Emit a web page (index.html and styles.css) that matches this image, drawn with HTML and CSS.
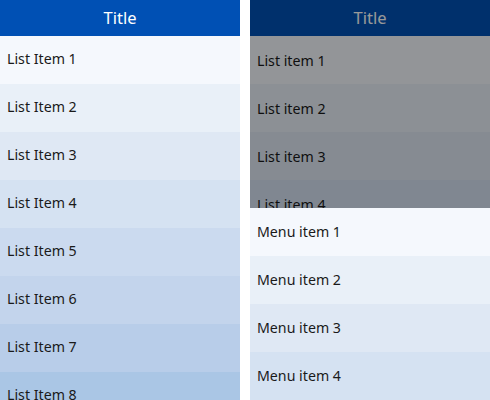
FILE: index.html
```html
<!DOCTYPE html>
<html>
<head>
<meta charset="utf-8">
<link rel="stylesheet" href="styles.css">
</head>
<body>
<div class="screens">
  <section class="screen">
    <header class="title">Title</header>
    <ul class="list">
      <li class="row r1">List Item 1</li>
      <li class="row r2">List Item 2</li>
      <li class="row r3">List Item 3</li>
      <li class="row r4">List Item 4</li>
      <li class="row r5">List Item 5</li>
      <li class="row r6">List Item 6</li>
      <li class="row r7">List Item 7</li>
      <li class="row r8">List Item 8</li>
    </ul>
  </section>
  <section class="screen popup-screen">
    <header class="title">Title</header>
    <ul class="list">
      <li class="row r1">List item 1</li>
      <li class="row r2">List item 2</li>
      <li class="row r3">List item 3</li>
      <li class="row r4">List item 4</li>
      <li class="row r5">List item 5</li>
    </ul>
    <div class="dim"></div>
    <ul class="menu">
      <li class="row r1">Menu item 1</li>
      <li class="row r2">Menu item 2</li>
      <li class="row r3">Menu item 3</li>
      <li class="row r4">Menu item 4</li>
    </ul>
  </section>
</div>
</body>
</html>
```
FILE: styles.css
```css
html, body {
  margin: 0;
  padding: 0;
  background: #ffffff;
}
body {
  font-family: "Noto Sans", "DejaVu Sans", sans-serif;
  width: 490px;
  height: 400px;
  overflow: hidden;
}
.screens {
  display: flex;
  gap: 10px;
  height: 400px;
}
.screen {
  width: 240px;
  height: 400px;
  overflow: hidden;
  display: flex;
  flex-direction: column;
}
.popup-screen {
  position: relative;
}
.title {
  height: 35px;
  padding-bottom: 1px;
  flex: none;
  background: #0050b4;
  color: #ffffff;
  font-size: 16.5px;
  display: flex;
  align-items: center;
  justify-content: center;
}
.list, .menu {
  list-style: none;
  margin: 0;
  padding: 0;
}
.row {
  height: 45px;
  padding-bottom: 3px;
  display: flex;
  align-items: center;
  padding-left: 7px;
  font-size: 14.2px;
  color: #1a1a1a;
}
.r1 { background: #f5f8fd; }
.r2 { background: #e9f0f8; }
.r3 { background: #dfe8f4; }
.r4 { background: #d5e2f2; }
.r5 { background: #cbdaef; }
.r6 { background: #c3d4ec; }
.r7 { background: #b8cde9; }
.r8 { background: #aac6e5; }
.dim {
  position: absolute;
  inset: 0;
  background: rgba(0, 0, 0, 0.4);
}
.menu {
  position: absolute;
  left: 0;
  right: 0;
  top: 208px;
}
.menu .row {
  height: 46px;
  padding-bottom: 2px;
}
.popup-screen .list .row {
  padding-top: 0;
  padding-bottom: 0;
  height: 48px;
}
```
